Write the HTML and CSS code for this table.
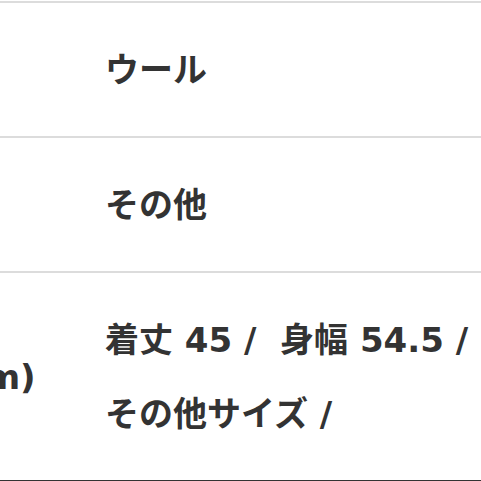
FILE: index.html
```html
<!DOCTYPE html>
<html lang="ja">
<head>
<meta charset="utf-8">
<link rel="stylesheet" href="styles.css">
</head>
<body>
<div class="spec">
  <div class="row">
    <div class="label">素材</div>
    <div class="value">ウール</div>
  </div>
  <div class="row">
    <div class="label">柄</div>
    <div class="value">その他</div>
  </div>
  <div class="row last">
    <div class="label">サイズ(cm)</div>
    <div class="value">着丈 45 /&nbsp; 身幅 54.5 /<br>その他サイズ /</div>
  </div>
</div>
</body>
</html>
```
FILE: styles.css
```css
html, body {
  margin: 0;
  padding: 0;
  background: #fff;
  overflow: hidden;
}
.spec {
  margin-top: 1px;
  margin-left: -200px;
  border-top: 2px solid #dcdcdc;
  border-bottom: 2px solid #333;
  font-family: "DejaVu Sans", "Noto Sans CJK JP", sans-serif;
  font-weight: 700;
  font-size: 34px;
  color: #333;
}
.row {
  display: grid;
  grid-template-columns: 305px 1fr;
  align-items: center;
  border-top: 2px solid #dcdcdc;
}
.row:first-child {
  border-top: 0;
}
.label {
  text-align: left;
  padding-left: 48px;
  white-space: nowrap;
  line-height: 74px;
}
.value {
  padding: 30px 0 29px;
  line-height: 74px;
  white-space: nowrap;
}
```
